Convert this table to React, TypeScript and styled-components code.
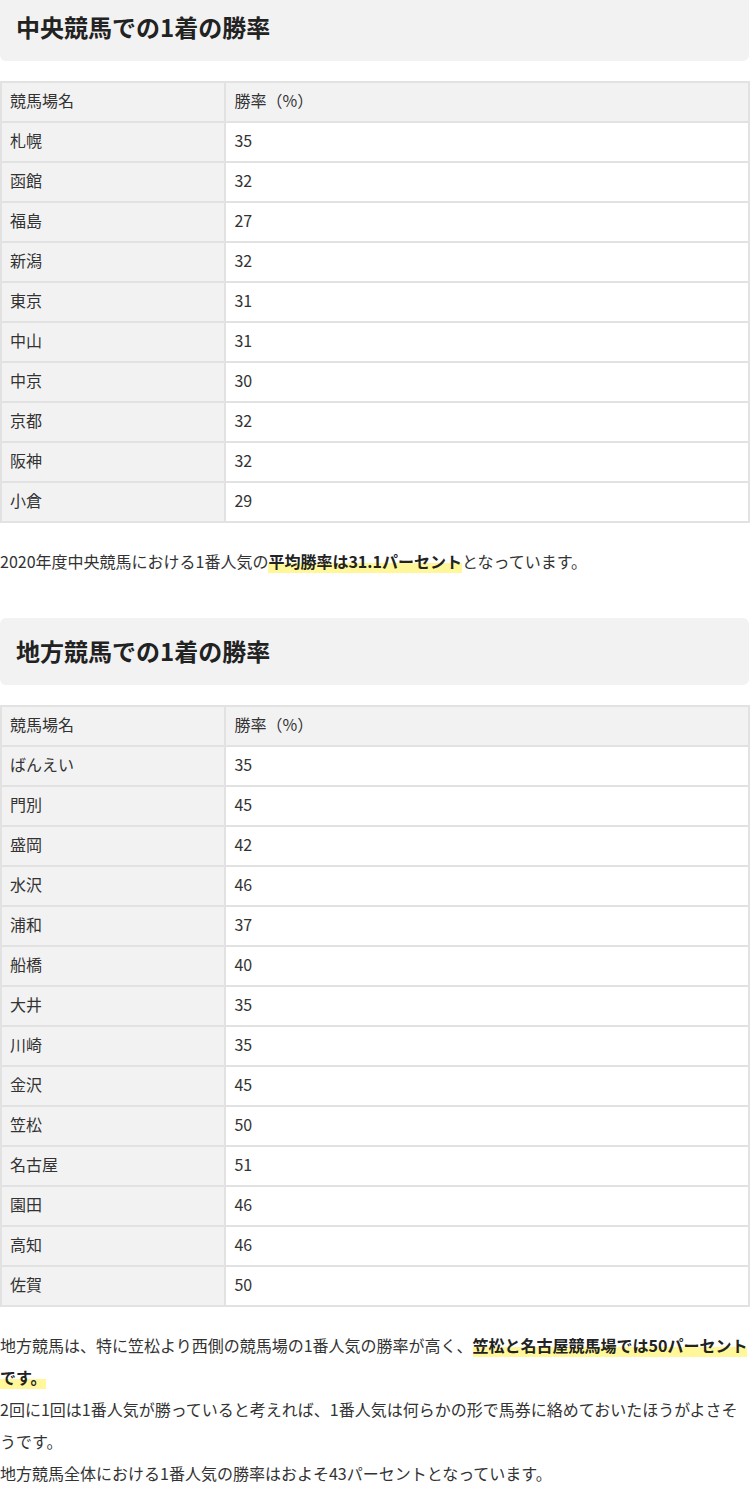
import React from "react";
import styled, { createGlobalStyle } from "styled-components";

const GlobalStyle = createGlobalStyle`
  body {
    margin: 0;
    background: #fff;
    font-family: "Noto Sans CJK JP", "Noto Sans", sans-serif;
    color: #333;
  }
`;

const StyledPage = styled.div`
  width: 750px;
  margin-top: -6px;
`;

const StyledHeading = styled.h2`
  margin: 0 1px 20px 0;
  padding: 14px 16px 16px;
  background: #f2f2f2;
  border-radius: 6px;
  font-size: 24px;
  font-weight: 700;
  line-height: 37px;
  color: #222;
`;

const StyledTable = styled.table`
  width: 100%;
  border-collapse: collapse;
  border: 2px solid #e2e2e2;
  margin-bottom: 22px;
  font-size: 16px;
`;

const StyledCell = styled.td<{ $shaded?: boolean }>`
  border: 2px solid #e2e2e2;
  padding: 5px 8px 9px;
  line-height: 24px;
  text-align: left;
  font-weight: 400;
  background: ${(p) => (p.$shaded ? "#f2f2f2" : "#fff")};
  &:first-child {
    width: 30%;
  }
`;

const StyledText = styled.p<{ $gap?: number }>`
  margin: 0 0 ${(p) => p.$gap || 0}px;
  font-size: 16px;
  line-height: 32px;
`;

const StyledMarker = styled.strong`
  font-weight: 700;
  color: #222;
  background: linear-gradient(transparent 60%, #fff799 60%);
`;

type Row = [string, string];

const central: Row[] = [
  ["札幌", "35"],
  ["函館", "32"],
  ["福島", "27"],
  ["新潟", "32"],
  ["東京", "31"],
  ["中山", "31"],
  ["中京", "30"],
  ["京都", "32"],
  ["阪神", "32"],
  ["小倉", "29"],
];

const local: Row[] = [
  ["ばんえい", "35"],
  ["門別", "45"],
  ["盛岡", "42"],
  ["水沢", "46"],
  ["浦和", "37"],
  ["船橋", "40"],
  ["大井", "35"],
  ["川崎", "35"],
  ["金沢", "45"],
  ["笠松", "50"],
  ["名古屋", "51"],
  ["園田", "46"],
  ["高知", "46"],
  ["佐賀", "50"],
];

const WinTable = ({ rows }: { rows: Row[] }) => (
  <StyledTable>
    <tbody>
      <tr>
        <StyledCell as="th" $shaded>競馬場名</StyledCell>
        <StyledCell as="th" $shaded>勝率（%）</StyledCell>
      </tr>
      {rows.map(([name, rate]) => (
        <tr key={name}>
          <StyledCell $shaded>{name}</StyledCell>
          <StyledCell>{rate}</StyledCell>
        </tr>
      ))}
    </tbody>
  </StyledTable>
);

const App = () => {
  return (
    <StyledPage>
      <GlobalStyle />
      <StyledHeading>中央競馬での1着の勝率</StyledHeading>
      <WinTable rows={central} />
      <StyledText $gap={41}>
        2020年度中央競馬における1番人気の
        <StyledMarker>平均勝率は31.1パーセント</StyledMarker>
        となっています。
      </StyledText>

      <StyledHeading>地方競馬での1着の勝率</StyledHeading>
      <WinTable rows={local} />
      <StyledText>
        地方競馬は、特に笠松より西側の競馬場の1番人気の勝率が高く、
        <StyledMarker>笠松と名古屋競馬場では50パーセントです。</StyledMarker>
      </StyledText>
      <StyledText>
        2回に1回は1番人気が勝っていると考えれば、1番人気は何らかの形で馬券に絡めておいたほうがよさそうです。
      </StyledText>
      <StyledText>地方競馬全体における1番人気の勝率はおよそ43パーセントとなっています。</StyledText>
    </StyledPage>
  );
};

export default App;
